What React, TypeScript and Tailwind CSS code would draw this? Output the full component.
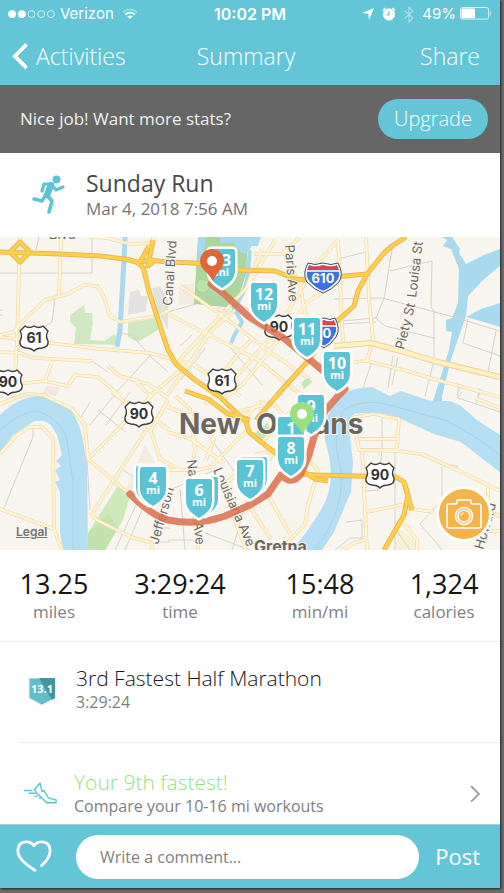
import { useState } from 'react'

const ROUTE =
  'M211 284 L223 293 L248 316 L285 339 L321 369 L345 389 L338 396 L325 411 L314 437 L309 455 L301 474 Q292 486 281 475 L268 494 L250 505 L225 516 Q198 526 168 520 Q152 516 130 494'

const gridRoads = [
  'M39 237 L36 250 M0 273 L60 273 M92 237 L92 273 L60 273 M55 297 L52 322 L36 332',
  'M0 310 L3 310 M0 315 L3 315 M120 333 L132 335 L150 356 L168 372 M92 361 L108 372',
  'M150 356 L120 388 L90 425 M130 392 L106 425 M98 410 L126 432 M90 402 L80 419 M33 427 L33 437 L4 508',
  'M87 460 L90 510 M123 470 L134 477 M115 550 L137 503 M125 550 L143 508 M158 528 L170 528 M158 542 L170 542',
  'M168 312 L196 304 M210 290 L290 330 M228 345 L262 385 M180 346 L192 335 M235 310 L262 330 M181 380 L205 348',
  'M180 489 L185 550 M170 490 L215 470 M168 540 L200 540 M212 440 L240 480 M250 490 L232 550 M265 455 L290 440 M205 533 L250 550',
  'M334 299 L382 298 L450 316 L500 331 M392 249 L384 299 L376 318 L385 326 L434 338 M390 271 L432 261 L431 307 L434 312 L434 360 L425 396',
  'M338 259 L366 252 M341 321 L376 318 M341 324 L376 322 M468 319 L463 343 L500 356 M496 331 L488 372 M372 361 L363 388 M393 356 L388 388 M398 357 L392 385 M460 384 L457 396 M480 388 L478 396',
  'M382 418 L382 448 M395 451 L395 550 M442 466 L442 500 L420 524 L434 540 L442 550 M457 470 L457 466 L440 464 M366 491 L378 490 L382 450 M346 522 L362 520 L362 538 L350 538 L335 550 M457 398 L462 392 M458 398 L500 412 M480 392 L476 404 M396 530 L410 550',
]

const surfaceRoads = [
  'M20 237 L17 340 L15 376',
  'M0 337 L50 343 L100 349 L150 353 L168 358',
  'M0 352 L20 353 L34 358 L92 361',
  'M0 335 L14 332 L22 322 L45 300 L68 294 L84 285 L97 286 L103 295 L110 316 L120 322 L157 316 L168 311',
  'M61 240 L59 297',
  'M88 237 L107 238 L130 244 L153 243',
  'M153 237 L153 243 L148 250',
  'M18 384 L45 381 L68 386 L75 375 L98 377 L120 396',
  'M51 364 L45 381 M108 366 L120 376 L148 384 L168 398',
  'M168 357 L182 369 L150 396 L135 380',
  'M0 404 L17 397 L28 394 L43 395 L72 409 L85 425 L88 459 L115 482 L130 494',
  'M0 454 L17 435 L30 427 L42 427 L53 439 L54 529 L62 550',
  'M0 509 L54 529',
  'M88 459 L125 422 L155 392',
  'M112 392 L127 404 L150 429 L160 459 L180 470',
  'M147 429 L92 514 L97 520 L131 537 L152 543 L152 550',
  'M168 400 L150 432 M155 420 L170 430',
  'M168 470 L198 470 L211 467 L235 442 L250 428',
  'M168 432 L191 439 L224 463',
  'M175 396 L190 409 L195 450 L190 480',
  'M168 407 L200 420 L214 440 L206 460',
  'M198 525 L198 550',
  'M216 490 L236 475 L270 470',
  'M250 507 L271 539 M268 495 L290 534 M232 513 L246 550',
  'M285 545 L305 524 L308 505 L315 482 M308 460 L318 470 L311 495',
  'M168 314 L215 338 L258 360 L300 394',
  'M175 365 L248 286 L275 240',
  'M168 394 L201 346 L212 330 L235 310',
  'M180 286 L228 320 L270 352 L308 378',
  'M181 361 L194 365 L240 396',
  'M205 404 L235 378 L275 333 L300 292 L315 266 L338 240',
  'M222 400 L243 384 L310 300 L340 282',
  'M253 338 L240 352 L222 374 M262 250 L246 288 L270 290',
  'M254 254 L282 254 L300 237 M285 254 L300 285 L306 318',
  'M338 240 L343 342 M366 237 L369 299 L373 339 L367 361',
  'M225 415 L268 404 L283 392 M238 424 L260 402 L276 406 L290 425',
  'M262 442 L290 412 M255 455 L284 448 L300 420 M272 455 L262 470',
  'M354 362 L367 361 L407 371 L437 380 L500 397',
  'M352 430 L354 417 L374 414 L399 419 L397 450 L359 450 L356 432',
  'M359 439 L397 439',
  'M362 450 L364 490 L367 550',
  'M359 450 L397 451 L422 454 L457 470 L500 491',
  'M367 512 L401 505 L412 509 L434 512',
  'M342 550 L354 543 L367 539',
  'M401 520 L417 540 L417 550',
  'M488 487 L488 500 M490 513 L500 516 M475 398 L500 408 M484 531 L500 531',
]

const highways = [
  'M0 252 L60 254 L100 256 L125 259 Q140 261 144 270 L148 288 L153 304 L162 332 L168 350 L176 364 L195 380 L220 397',
  'M125 259 Q140 264 148 260 L168 262 L195 263 L240 270 L275 271 L295 279 L308 280 L334 277 L367 274',
  'M406 237 L392 246 L384 253 L367 274 L358 291 L354 306 L337 321 L308 361 L278 394 L256 420',
  'M185 391 L208 399 L228 414 L250 420',
  'M220 397 L246 422 L249 432 L261 442 L278 455 L301 470 L315 479 L328 481',
  'M301 474 L315 475 L396 477 L404 482 L408 495 L404 515 L384 550',
  'M404 482 L412 510 M20 242 L10 252 L20 262 L30 252 Z M149 246 L140 262 M153 240 L148 266 L155 260',
]

type Mile = { x: number; y: number; label: string }

const miles: Mile[] = [
  { x: 149, y: 466, label: '' },
  { x: 153, y: 467, label: '4' },
  { x: 205, y: 477, label: '' },
  { x: 199, y: 479, label: '6' },
  { x: 254, y: 457, label: '' },
  { x: 250, y: 460, label: '7' },
  { x: 222, y: 249, label: '13' },
  { x: 264, y: 283, label: '12' },
  { x: 307, y: 318, label: '11' },
  { x: 337, y: 352, label: '10' },
  { x: 311, y: 395, label: '9' },
  { x: 291, y: 417, label: '1' },
  { x: 291, y: 437, label: '8' },
]

const stats = [
  { value: '13.25', label: 'miles' },
  { value: '3:29:24', label: 'time' },
  { value: '15:48', label: 'min/mi' },
  { value: '1,324', label: 'calories' },
]

function MileMarker({ x, y, label }: Mile) {
  return (
    <g transform={`translate(${x} ${y})`}>
      <path
        d="M-11 0 H11 Q13 0 13 3 V22 Q13 32 0 39 Q-13 32 -13 22 V3 Q-13 0 -11 0 Z"
        fill="#5bc4d4"
        stroke="#fff"
        strokeWidth="5"
        paintOrder="stroke"
        strokeLinejoin="round"
      />
      {label && (
        <g fill="#fff" textAnchor="middle" className="font-['Noto_Sans',sans-serif] font-bold">
          <text y="17" fontSize="16">{label}</text>
          <text y="27" fontSize="11">mi</text>
        </g>
      )}
    </g>
  )
}

function Pin({ x, y, color }: { x: number; y: number; color: string }) {
  return (
    <g transform={`translate(${x} ${y})`}>
      <path d="M0 -12 A12 12 0 0 1 12 0 C12 7 4 12 1 20 C-3 12 -12 8 -12 0 A12 12 0 0 1 0 -12 Z" fill={color} />
      <circle r="5" fill="#fff" />
    </g>
  )
}

function UsShield({ x, y, label }: Mile) {
  return (
    <g transform={`translate(${x} ${y})`}>
      <path
        d="M-9 -12 Q-5 -9 0 -12 Q5 -9 9 -12 L14 -7 Q11 -2 14 3 Q15 9 8 10 Q3 10 0 13 Q-3 10 -8 10 Q-15 9 -14 3 Q-11 -2 -14 -7 Z"
        fill="#fff"
        stroke="#3c3c3c"
        strokeWidth="1.4"
        strokeLinejoin="round"
      />
      <text y="5" fontSize="14" textAnchor="middle" fill="#333" className="font-['Inter',sans-serif] font-bold">
        {label}
      </text>
    </g>
  )
}

function InterstateShield({ x, y, label, r }: Mile & { r: number }) {
  return (
    <g transform={`translate(${x} ${y})`}>
      <path
        d={`M${-r + 3} -13 Q${-r / 2} -10 0 -13 Q${r / 2} -10 ${r - 3} -13 Q${r + 3} -3 ${r - 2} 4 Q${r / 2} 12 0 15 Q${-r / 2} 12 ${-r + 2} 4 Q${-r - 3} -3 ${-r + 3} -13 Z`}
        fill="#3d72e0"
        stroke="#fff"
        strokeWidth="2"
      />
      <path d={`M${-r + 3} -12 Q${-r / 2} -9 0 -12 Q${r / 2} -9 ${r - 3} -12 L${r - 1} -7 H${-r + 1} Z`} fill="#df4350" />
      <path d={`M${-r} -6 H${r}`} stroke="#fff" strokeWidth="1.5" />
      <path
        d={`M${-r + 2} -14 Q${-r / 2} -11 0 -14 Q${r / 2} -11 ${r - 2} -14 Q${r + 4} -3 ${r - 1} 5 Q${r / 2} 13 0 16 Q${-r / 2} 13 ${-r + 1} 5 Q${-r - 4} -3 ${-r + 2} -14 Z`}
        fill="none"
        stroke="#3a4a70"
        strokeWidth="1"
      />
      <text y="6" fontSize="13" textAnchor="middle" fill="#fff" className="font-['Inter',sans-serif] font-bold">
        {label}
      </text>
    </g>
  )
}

function RouteMap() {
  return (
    <section aria-label="Route map" className="relative">
      <svg viewBox="0 237 500 313" className="block w-full">
        <rect y="237" width="500" height="313" fill="#f8f5ef" />

        {/* land use */}
        <path d="M70 315 L84 305 L85 313 L92 313 L93 323 L90 340 L104 341 L115 334 L118 345 L74 344 L76 328 L70 322 Z" fill="#d0e8c0" />
        <path d="M128 323 L157 318 L158 330 L138 342 L128 337 Z" fill="#d0e8c0" />
        <path d="M130 292 L139 290 L141 296 L148 296 L146 311 L128 315 Z M152 288 L160 286 L168 300 L168 330 L158 312 Z" fill="#e3e2e1" />
        <path d="M45 386 L60 387 L56 396 L43 394 Z" fill="#f6e4e0" />
        <path d="M198 237 H248 L246 274 L235 308 L194 304 Z" fill="#acd5a0" />
        <circle cx="203" cy="286" r="6" fill="#b9e5a6" />
        <path d="M180 284 H194 V304 L178 305 Z M215 306 L236 310 L220 325 Z M145 445 L156 465 L132 500 L126 490 Z" fill="#f3ebdf" />
        <path d="M255 433 L268 422 L270 435 L260 442 Z M301 383 L308 377 L312 382 L304 389 Z" fill="#c5e6b6" />
        <path d="M117 487 L124 488 L130 495 L123 520 L105 550 H88 V533 Z" fill="#cde8b9" />
        <path d="M88 533 L108 514 L118 528 L105 550 H88 Z" fill="#c2e2ae" />
        <path d="M398 528 L414 540 L416 550 H395 Z" fill="#f8efd5" />

        {/* water */}
        <g fill="#a9d9ee">
          <path d="M198 237 H206 L203 258 L198 262 Z M220 237 H261 L258 246 H252 L247 253 H241 L234 243 H220 Z" />
          <path d="M442 237 L447 240 L443 246 L451 249 L459 269 L458 303 L452 318 L446 320 V331 L452 332 L449 350 L434 398 L431 404 H442 V396 L451 359 L466 316 L468 296 L484 279 L500 266 V249 L484 255 L466 264 L459 253 L460 249 L452 237 Z" />
          <path d="M466 317 L481 309 L500 303 V327 L484 322 Z" />
        </g>
        <path d="M125 237 L124 260 L120 330 L117 347" fill="none" stroke="#a9d9ee" strokeWidth="5" />
        <path d="M250 250 L247 280 L243 293 L234 309 L242 322 L235 334 L231 343" fill="none" stroke="#a9d9ee" strokeWidth="4" />
        <path
          d="M0 415 Q17 398 37 396 Q60 398 72 412 Q80 424 83 440 L87 465 L88 550 H63 L60 532 V492 L55 482 L60 480 L55 470 L61 466 L56 461 L62 455 L57 435 Q50 421 43 421 Q34 420 30 424 L13 435 L0 454 Z"
          fill="#b5def2"
        />
        <path d="M0 430 Q20 412 37 411 Q55 416 66 435 L73 480 V550" fill="none" stroke="#a5d2ea" />
        <path
          d="M338 397 Q352 387 372 387 L390 396 L401 391 L431 401 H450 L461 406 L477 420 L500 435 V472 L484 460 L461 442 L434 434 L401 419 Q380 410 354 414 Q346 420 350 436 L353 462 L351 492 L334 532 L322 550 H290 Q306 535 311 525 Q326 505 329 490 Q334 470 325 440 Q322 420 338 397 Z"
          fill="#b5def2"
        />
        <path d="M315 550 Q345 510 341 470 Q330 430 344 410 Q365 396 400 408 L445 420 Q475 435 500 455" fill="none" stroke="#a5d2ea" />

        {/* streets */}
        <g fill="none" stroke="#d3d2d0" strokeWidth="1">
          {gridRoads.map((d) => <path key={d} d={d} />)}
        </g>
        <g fill="none" stroke="#f3d6a4" strokeWidth="3.600" strokeLinejoin="round">
          {surfaceRoads.map((d) => <path key={d} d={d} />)}
        </g>
        <g fill="none" stroke="#fef7d6" strokeWidth="2.200" strokeLinejoin="round">
          {surfaceRoads.map((d) => <path key={d} d={d} />)}
        </g>
        <path d="M334 346 L371 343 L401 351 L434 361 L500 377" fill="none" stroke="#f1cf96" strokeWidth="6" />
        <path d="M334 346 L371 343 L401 351 L434 361 L500 377" fill="none" stroke="#fef3c0" strokeWidth="4" />
        <g fill="none" stroke="#eeb455" strokeWidth="5" strokeLinejoin="round">
          {highways.map((d) => <path key={d} d={d} />)}
        </g>
        <g fill="none" stroke="#fbd14b" strokeWidth="3" strokeLinejoin="round">
          {highways.map((d) => <path key={d} d={d} />)}
        </g>

        {/* street names */}
        <g fontSize="13" fill="#6b6964" stroke="#f8f5ef" strokeWidth="2" paintOrder="stroke" className="font-['Inter',sans-serif]">
          <text x="49" y="239">Blvd</text>
          <text transform="translate(172 306) rotate(-86)">Canal Blvd</text>
          <text transform="translate(285 245) rotate(86)">Paris Ave</text>
          <text transform="translate(404 350) rotate(-76)">Piety St</text>
          <text transform="translate(416 298) rotate(-83)">Louisa St</text>
          <text transform="translate(158 545) rotate(-74)">Jefferson</text>
          <text transform="translate(187 460) rotate(84)">Napoleon Ave</text>
          <text transform="translate(213 470) rotate(66)">Louisiana Ave</text>
          <text transform="translate(483 550) rotate(-74)">Howard</text>
        </g>

        <UsShield x={34} y={338} label="61" />
        <UsShield x={222} y={381} label="61" />
        <UsShield x={8} y={382} label="90" />
        <UsShield x={139} y={414} label="90" />
        <UsShield x={279} y={327} label="90" />
        <UsShield x={380} y={475} label="90" />
        <InterstateShield x={323} y={277} r={17} label="610" />
        <InterstateShield x={324} y={332} r={13} label="10" />

        <g fill="#6b665f" stroke="#f8f5ef" strokeWidth="2" paintOrder="stroke" className="font-['Inter',sans-serif] font-bold">
          <text x="179" y="434" fontSize="28">New</text>
          <text x="256" y="434" fontSize="28">Orleans</text>
          <text x="254" y="552" fontSize="16">Gretna</text>
        </g>

        <path d={ROUTE} fill="none" stroke="#dc6f4b" strokeOpacity="0.85" strokeWidth="7" strokeLinecap="round" strokeLinejoin="round" />
        {miles.map((m) => <MileMarker key={`${m.x}-${m.y}`} {...m} />)}
        <Pin x={212} y={261} color="#e06637" />
        <Pin x={302} y={414} color="#9be07f" />
      </svg>

      <a href="#legal" className="absolute bottom-2 left-4 font-['Inter',sans-serif] text-xs font-semibold leading-5 text-[#77746f] underline">
        Legal
      </a>
      <button
        type="button"
        aria-label="Add photo"
        className="absolute bottom-2 right-2 flex size-14 items-center justify-center rounded-full border-3 border-white bg-[#f2b44b]"
      >
        <svg viewBox="0 0 36 30" className="w-9" fill="none" stroke="#fff" strokeWidth="1.6" strokeLinejoin="round">
          <path d="M1 7 Q1 5 3 5 H9 Q11 5 11 3 V2 Q11 1 12 1 H24 Q25 1 25 2 V3 Q25 5 27 5 H33 Q35 5 35 7 V27 Q35 29 33 29 H3 Q1 29 1 27 Z" />
          <circle cx="18" cy="17" r="8.5" />
          <circle cx="18" cy="17" r="6" />
          <path d="M15 17 Q15 14 18 14" strokeWidth="1.2" />
        </svg>
      </button>
    </section>
  )
}

function StatusBar() {
  return (
    <div className="flex h-7 items-center px-2 font-['Inter',sans-serif] text-[15px]">
      <div className="flex flex-1 items-center gap-1">
        <svg viewBox="0 0 47 8" className="w-12" fill="none" stroke="#fff" strokeWidth="0.7">
          <circle cx="4" cy="4" r="3.6" fill="#fff" />
          <circle cx="13.5" cy="4" r="3.6" fill="#fff" />
          <circle cx="23" cy="4" r="3.4" />
          <circle cx="32.5" cy="4" r="3.4" />
          <circle cx="42" cy="4" r="3.4" />
        </svg>
        <span>Verizon</span>
        <svg viewBox="0 0 18 13" className="ml-1 w-4" fill="none" stroke="#fff" strokeWidth="2">
          <path d="M1 5 Q9 -2 17 5" strokeOpacity="0.4" />
          <path d="M3.500 7.500 Q9 3 14.500 7.500" />
          <path d="M9 12.500 L6 9.500 Q9 7.500 12 9.500 Z" fill="#fff" stroke="none" />
        </svg>
      </div>
      <span className="text-base font-semibold">10:02 PM</span>
      <div className="flex flex-1 items-center justify-end gap-2">
        <svg viewBox="0 0 12 12" className="w-3">
          <path d="M12 0 L7 12 L6.300 5.700 L0 5 Z" fill="#fff" />
        </svg>
        <svg viewBox="0 0 14 14" className="w-3.5" fill="none" stroke="#fff">
          <circle cx="7" cy="7.500" r="5.600" fill="#fff" />
          <path d="M1 3.500 L3.500 1 M13 3.500 L10.500 1" strokeWidth="1.6" />
          <path d="M7 4 V8 H4.500" stroke="#63c5d5" strokeWidth="1.2" />
        </svg>
        <svg viewBox="0 0 10 17" className="w-2.5" fill="none" stroke="#fff" strokeOpacity="0.45" strokeWidth="1.2">
          <path d="M0.500 4.500 L9 12 L5 16 V1 L9 5 L0.500 12.500" />
        </svg>
        <span>49%</span>
        <svg viewBox="0 0 33 14" className="-ml-1 w-8">
          <rect x="0.500" y="0.500" width="29" height="12" rx="2" fill="none" stroke="#fff" strokeOpacity="0.8" />
          <rect x="1.500" y="1.500" width="14" height="10" rx="1" fill="#fff" />
          <path d="M31 4 Q33 6.500 31 9 Z" fill="#fff" />
        </svg>
      </div>
    </div>
  )
}

export default function App() {
  const [comment, setComment] = useState('')

  return (
    <div className="min-h-screen bg-[#6b6b6b] pb-1 pr-1 font-['Open_Sans',sans-serif]">
      <div className="bg-white shadow-[1px_1px_2px_#222]">
        <header className="bg-[#63c5d5] text-white">
          <StatusBar />
          <nav className="grid h-[57px] grid-cols-3 items-center pl-3 pr-5 text-[23px] font-light">
            <a href="#activities" className="flex items-center gap-2">
              <svg viewBox="0 0 17 28" className="w-4" fill="none" stroke="#fff" strokeWidth="4">
                <path d="M15.500 1.500 L3 14 L15.500 26.500" />
              </svg>
              Activities
            </a>
            <h1 className="text-center">Summary</h1>
            <a href="#share" className="text-right">Share</a>
          </nav>
        </header>

        <div className="flex h-17 items-center justify-between bg-[#666] pl-5 pr-3 text-white">
          <p className="text-[17px] text-[#f0f0f0]">Nice job! Want more stats?</p>
          <button type="button" className="h-10 rounded-full bg-[#63c5d5] px-4 text-xl font-light leading-10">
            Upgrade
          </button>
        </div>

        <section className="flex h-21 items-center gap-5 pl-8">
          <svg viewBox="0 0 34 40" className="w-8.5" fill="none" stroke="#5bc4d4" strokeWidth="4" strokeLinecap="round" strokeLinejoin="round">
            <circle cx="24.500" cy="4.500" r="4" fill="#5bc4d4" stroke="none" />
            <path d="M10 16 L12 9 L19 9 L24 15 L31 12" strokeWidth="3.200" />
            <path d="M19 10 L15 20" strokeWidth="6.500" />
            <path d="M13 21 L10 26 L2 24" strokeWidth="3.400" />
            <path d="M15 20 L20 26 L17 37" strokeWidth="3.600" />
          </svg>
          <div>
            <h2 className="text-[23px] leading-7 text-[#484848]">Sunday Run</h2>
            <p className="text-[17px] leading-6 text-[#757575]">Mar 4, 2018 7:56 AM</p>
          </div>
        </section>

        <RouteMap />

        <dl className="grid h-23 grid-cols-[27fr_36fr_34fr_28fr] items-center border-b border-[#ececec] text-center">
          {stats.map((s) => (
            <div key={s.label} className="flex flex-col-reverse">
              <dt className="text-[17px] leading-6 text-[#808080]">{s.label}</dt>
              <dd className="text-[27px] leading-8 text-[#161616]">{s.value}</dd>
            </div>
          ))}
        </dl>

        <section className="flex h-25 items-center gap-5 pl-7">
          <svg viewBox="0 0 28 28" className="w-7">
            <path d="M1 0 H27 V20 L14 27 L1 20 Z" fill="#62bccc" stroke="#dceff2" strokeWidth="1" />
            <path d="M11 0 H27 V20 L24 22 Z" fill="#45959f" />
            <text x="14" y="15" fontSize="11" textAnchor="middle" fill="#fff" className="font-bold">13.1</text>
          </svg>
          <div className="pb-1">
            <h3 className="text-[21px] font-light leading-6 text-[#161616]">3rd Fastest Half Marathon</h3>
            <p className="text-base leading-6 text-[#808080]">3:29:24</p>
          </div>
        </section>

        <a href="#compare" className="ml-5 flex h-[82px] items-center gap-4 border-t border-[#ececec] pr-5 pt-5">
          <svg viewBox="0 0 36 24" className="ml-1 w-8.5" fill="none" stroke="#5bc4d4" strokeWidth="1.500" strokeLinejoin="round">
            <path d="M17 1 L11 8 Q13 12 17 15 L24 22 H34 V19 L26 17 L21 9 L19 10 Z" />
            <path d="M0 9 H9 M5 12 H13 M11 15 H15 M16 17 H18" />
          </svg>
          <div className="flex-1">
            <h3 className="text-[21px] font-light leading-6 text-[#97df80]">Your 9th fastest!</h3>
            <p className="text-base leading-6 text-[#808080]">Compare your 10-16 mi workouts</p>
          </div>
          <svg viewBox="0 0 9 16" className="w-2.5" fill="none" stroke="#999" strokeWidth="1.600">
            <path d="M1 1 L8 8 L1 15" />
          </svg>
        </a>

        <form
          className="flex h-16 items-center gap-4 border-t border-[#a6cfd6] bg-[#63c5d5] pl-4 pr-5 text-white"
          onSubmit={(e) => e.preventDefault()}
        >
          <button type="button" aria-label="Like" className="pr-2">
            <svg viewBox="0 0 38 34" className="w-9" fill="none" stroke="#fff" strokeWidth="3" strokeLinecap="round" strokeLinejoin="round">
              <path d="M20 32 Q2 21 2 12 Q2 2 11 2 Q16 2 19 6 Q22 2 27 2 Q36 2 36 12 Q36 19 27 27" />
            </svg>
          </button>
          <input
            aria-label="Comment"
            value={comment}
            onChange={(e) => setComment(e.target.value)}
            placeholder="Write a comment..."
            className="h-11 min-w-0 flex-1 rounded-full bg-white px-6 text-base text-[#555] outline-none placeholder:text-[#808080]"
          />
          <button type="submit" className="text-[22px]">Post</button>
        </form>
      </div>
    </div>
  )
}
